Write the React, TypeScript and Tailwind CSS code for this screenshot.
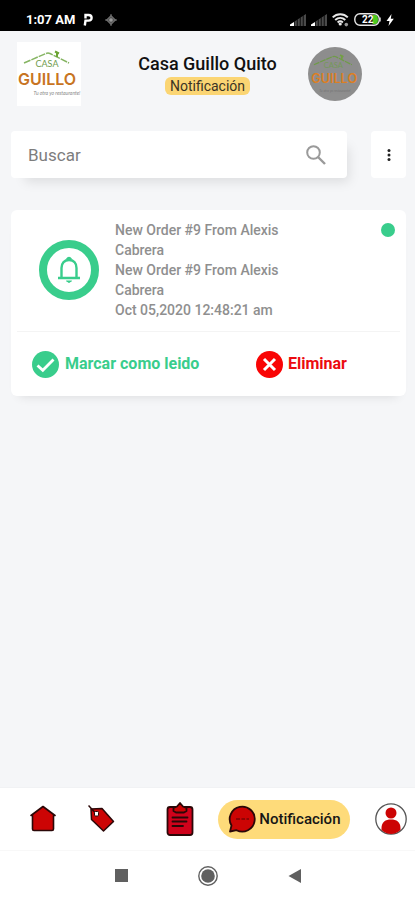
import type { ReactNode } from 'react';
import { clsx } from 'clsx';

interface Notification {
  id: number;
  title: string;
  message: string;
  date: string;
  unread: boolean;
}

const NOTIFICATIONS: Notification[] = [
  {
    id: 9,
    title: 'New Order #9 From Alexis Cabrera',
    message: 'New Order #9 From Alexis Cabrera',
    date: 'Oct 05,2020 12:48:21 am',
    unread: true,
  },
];

function SignalIcon() {
  return (
    <svg width="16" height="12" viewBox="0 0 16 12" aria-hidden="true">
      <path d="M0 12V10.500L4 8V12Z" fill="#fff" />
      <path
        d="M4.600 12V7.500L6.800 6V12ZM7.600 12V5.400L9.800 4V12ZM10.600 12V3.400L12.800 2V12ZM13.600 12V1.400L16 0V12Z"
        fill="#4a4a4a"
      />
    </svg>
  );
}

function WifiIcon() {
  return (
    <svg width="17" height="14" viewBox="0 0 17 14" fill="none" aria-hidden="true">
      <g stroke="#e8e8e8" strokeWidth="2">
        <path d="M0.700 4.400C5 0.300 11.500 0.300 15.800 4.400" />
        <path d="M3.200 7C6.200 4.200 10.300 4.200 13.300 7" />
        <path d="M5.600 9.400C7.200 8 9.300 8 10.900 9.400" />
      </g>
      <circle cx="8.200" cy="11" r="1.600" fill="#e8e8e8" />
      <circle cx="14.300" cy="11.600" r="1.800" fill="#999" />
    </svg>
  );
}

function BatteryIcon() {
  return (
    <svg width="27" height="13" viewBox="0 0 27 13" aria-hidden="true">
      <path d="M18.500 2H21.500Q24 2 24 6.500T21.500 11H18.500Z" fill="#4ccb1f" />
      <rect x="0.800" y="0.800" width="24.400" height="11.400" rx="5.200" fill="none" stroke="#e8e8e8" strokeWidth="1.400" />
      <path d="M26 4.500V8.500" stroke="#e8e8e8" strokeWidth="1.400" />
      <text x="8" y="10" fill="#fff" fontFamily="Roboto, sans-serif" fontSize="10" fontWeight="700">
        22
      </text>
    </svg>
  );
}

function StatusBar() {
  return (
    <div className="flex h-[31px] items-center justify-between bg-black pt-2 pr-[21px] pl-[26px] text-white">
      <div className="flex items-center gap-2">
        <span className="text-[13px] leading-4 font-bold">1:07 AM</span>
        <svg width="10" height="13" viewBox="0 0 10 13" fill="none" aria-hidden="true">
          <path d="M2.500 5.500V2H5.500Q8.600 2 8.600 4.800T5.500 7.600H2.500L1.800 12.500" stroke="#fff" strokeWidth="2.400" />
        </svg>
        <svg width="12" height="12" viewBox="0 0 12 12" fill="none" className="ml-1" aria-hidden="true">
          <path d="M6 0V12M0 6H12" stroke="#777" strokeWidth="1" />
          <path d="M6 1.500L10.500 6L6 10.500L1.500 6Z" fill="#555" stroke="#888" />
          <circle cx="6" cy="6" r="1.800" fill="#999" />
        </svg>
      </div>
      <div className="flex items-center gap-[5px]">
        <SignalIcon />
        <SignalIcon />
        <WifiIcon />
        <BatteryIcon />
        <svg width="8" height="12" viewBox="0 0 8 12" aria-hidden="true">
          <path d="M5.500 0L0.500 7H3.500L2.500 12L7.800 4.800H4.800Z" fill="#fff" />
        </svg>
      </div>
    </div>
  );
}

function Logo({ muted = false }: { muted?: boolean }) {
  return (
    <svg
      viewBox="0 0 64 64"
      role="img"
      aria-label="Casa Guillo"
      className={clsx('shrink-0', muted ? 'size-[54px] opacity-80' : 'size-16 bg-white')}
    >
      <path
        d="M7 21L29 11.500Q31 10.500 33 11.500L52 21"
        fill="none"
        stroke={muted ? '#689f38' : '#86b563'}
        strokeWidth="1.500"
        strokeDasharray="7 1"
      />
      <path d="M40 15V10M38 9.500L42 11.500" stroke="#6ca432" strokeWidth="2" />
      <text x="30" y="25" textAnchor="middle" fill="#6f9c4d" fontFamily="Lato, sans-serif" fontSize="9">
        CASA
      </text>
      <text
        x={muted ? 31 : 30}
        y="43"
        textAnchor="middle"
        fill={muted ? '#f07c08' : '#c87422'}
        fontFamily="Inter, sans-serif"
        fontSize={muted ? 15 : 16}
        fontWeight="600"
      >
        GUILLO
      </text>
      <text
        x={muted ? 32 : 40}
        y="53"
        textAnchor="middle"
        fill={muted ? '#6f6f6f' : '#8a8a8a'}
        fontFamily="Lato, sans-serif"
        fontSize={muted ? 4 : 5}
        fontStyle="italic"
      >
        Tu otra yo restaurante!
      </text>
    </svg>
  );
}

function Header() {
  return (
    <header className="grid grid-cols-[1fr_auto_1fr] items-center pt-[11px]">
      <div className="pl-[17px]">
        <Logo />
      </div>
      <div className="flex flex-col items-center">
        <h1 className="text-[18px] leading-5 font-medium text-[#111]">Casa Guillo Quito</h1>
        <span className="mt-[3px] rounded-md bg-[#fbd573] px-[5px] text-[14px] leading-[18px] text-[#3a3325]">
          Notificación
        </span>
      </div>
      <div className="pl-[31px]">
        <div className="flex size-[54px] items-center justify-center overflow-hidden rounded-full bg-[#8e8e8e]">
          <Logo muted />
        </div>
      </div>
    </header>
  );
}

function SearchRow() {
  return (
    <div className="flex gap-6 pt-[25px] pr-[9px] pl-[11px]">
      <label className="flex h-[47px] min-w-0 flex-1 items-center rounded bg-white pr-[21px] pl-[17px] shadow-[8px_10px_12px_-6px_rgba(0,0,0,0.1)]">
        <input
          type="search"
          aria-label="Buscar"
          placeholder="Buscar"
          className="min-w-0 flex-1 text-[17px] leading-6 outline-none placeholder:text-[#7d7d7d]"
        />
        <svg width="20" height="20" viewBox="0 0 20 20" fill="none" stroke="#9a9a9a" strokeWidth="2" aria-hidden="true">
          <circle cx="7.500" cy="7.500" r="6.300" />
          <path d="M12 12L19 19" strokeWidth="2.400" />
        </svg>
      </label>
      <button type="button" aria-label="Opciones" className="flex h-[47px] w-[35px] items-center justify-center rounded bg-white">
        <svg width="4" height="14" viewBox="0 0 4 14" fill="#222" aria-hidden="true">
          <circle cx="2" cy="2.500" r="1.500" />
          <circle cx="2" cy="7" r="1.500" />
          <circle cx="2" cy="11.500" r="1.500" />
        </svg>
      </button>
    </div>
  );
}

function NotificationCard({ item }: { item: Notification }) {
  return (
    <article className="rounded-md bg-white shadow-[0_8px_10px_-8px_rgba(0,0,0,0.12)]">
      <div className="flex items-start pt-[10px] pr-[11px] pb-[11px] pl-7">
        <div className="flex size-[60px] shrink-0 items-center justify-center self-center rounded-full border-8 border-[#39cd8c]">
          <svg width="24" height="28" viewBox="0 0 24 28" fill="none" stroke="#39cd8c" strokeWidth="2.400" aria-hidden="true">
            <path d="M1 22H23M4.500 22V12C4.500 7 7.500 4 12 4S19.500 7 19.500 12V22" />
            <path d="M10 3.500Q12 0.500 14 3.500" />
            <path d="M9.500 25H14.500L12 26.500Z" strokeWidth="1" fill="#39cd8c" />
          </svg>
        </div>
        <div className="ml-4 w-[176px] text-[14px] leading-5 font-medium text-[#8f8f8f]">
          <p>{item.title}</p>
          <p>{item.message}</p>
          <p>{item.date}</p>
        </div>
        {item.unread && <span className="mt-[3px] ml-auto size-[14px] shrink-0 rounded-full bg-[#39cd8c]" />}
      </div>

      {/* Actions */}
      <div className="mx-[6px] grid grid-cols-[224fr_144fr] border-t border-[#f4f4f4] py-[18px] pl-[15px] text-[16px] leading-7 font-bold">
        <button type="button" className="flex items-center gap-[6px] text-left text-[#39cd8c]">
          <svg width="27" height="27" viewBox="0 0 27 27" fill="none" aria-hidden="true">
            <circle cx="13.500" cy="13.500" r="13.500" fill="#39cd8c" />
            <path d="M5.500 14.500L10.800 19.300L21.500 8.500" stroke="#fff" strokeWidth="2.800" />
          </svg>
          Marcar como leido
        </button>
        <button type="button" className="flex items-center gap-[5px] text-left text-[#ec0b10]">
          <svg width="27" height="27" viewBox="0 0 27 27" fill="none" aria-hidden="true">
            <circle cx="13.500" cy="13.500" r="13.500" fill="#f90505" />
            <path d="M8 8L19 19M19 8L8 19" stroke="#fff" strokeWidth="3" />
          </svg>
          Eliminar
        </button>
      </div>
    </article>
  );
}

function NavLink({ label, children, className }: { label: string; children: ReactNode; className?: string }) {
  return (
    <a href="#" aria-label={label} className={className}>
      {children}
    </a>
  );
}

function BottomNav() {
  return (
    <nav className="flex h-[63px] items-center justify-between border-t border-[#f1f2f4] bg-white pr-2 pl-[30px]">
      <div className="flex items-center gap-8">
        <NavLink label="Inicio">
          <svg width="26" height="28" viewBox="0 0 26 28" stroke="#2b0808" strokeWidth="1.600" strokeLinejoin="round" aria-hidden="true">
            <path d="M1 10.500L13 1.500L25 10.500H23.500V24Q23.500 25.500 22 25.500H4Q2.500 25.500 2.500 24V10.500Z" fill="#cc0404" />
          </svg>
        </NavLink>
        <NavLink label="Ofertas">
          <svg width="27" height="28" viewBox="0 0 27 28" stroke="#2b0808" strokeWidth="1.500" strokeLinejoin="round" aria-hidden="true">
            <path d="M3 4L14 3.500L25.500 16.500L15.500 26L3.500 14.500Z" fill="#cc0404" />
            <rect x="6.500" y="6.500" width="4" height="4.500" rx="1" fill="#fff" strokeWidth="1" />
            <path d="M0.500 0.500L6.500 7" />
          </svg>
        </NavLink>
      </div>
      <NavLink label="Pedidos" className="ml-[26px]">
        <svg width="28" height="34" viewBox="0 0 28 34" stroke="#2b0808" strokeWidth="1.800" strokeLinejoin="round" aria-hidden="true">
          <rect x="1.500" y="5" width="25" height="28" rx="2.500" fill="#d0021b" />
          <path d="M7.500 9V6L11 4.500L14 1L17 4.500L20.500 6V9L18 10.500H10Z" fill="#cc0404" />
          <path d="M6.500 15.500H21.500M6.500 19.500H20.500M6.500 24H17" strokeLinecap="round" />
        </svg>
      </NavLink>
      <a
        href="#"
        aria-current="page"
        className="flex h-[39px] w-[132px] items-center gap-[3px] rounded-[20px] bg-[#fedb7a] pl-[10px] text-[15px] font-medium text-[#161616]"
      >
        <svg width="28" height="28" viewBox="0 0 28 28" className="shrink-0" aria-hidden="true">
          <path
            d="M2 26.500L3.500 20.500A12.500 12.500 0 1 1 8.500 25.200Z"
            fill="#cc0404"
            stroke="#2b0808"
            strokeWidth="1.800"
            strokeLinejoin="round"
          />
          <path d="M8 14H12M13.500 14H17M18.500 14H21" stroke="#7c0303" strokeWidth="1.400" />
        </svg>
        Notificación
      </a>
      <NavLink label="Perfil">
        <svg width="32" height="32" viewBox="0 0 32 32" aria-hidden="true">
          <circle cx="16" cy="16" r="15.200" fill="#fff" stroke="#555" strokeWidth="1.300" />
          <circle cx="16" cy="10" r="5.500" fill="#cc0404" />
          <path d="M6.500 27V25C6.500 19 10.500 16.500 16 16.500S25.500 19 25.500 25V27Q21 31 16 31T6.500 27Z" fill="#cc0404" />
        </svg>
      </NavLink>
    </nav>
  );
}

function SystemNav() {
  return (
    <div className="flex h-[50px] items-center justify-center gap-[70px] border-t border-[#f8f8f8] bg-white">
      <button type="button" aria-label="Recientes">
        <svg width="13" height="13" viewBox="0 0 13 13" aria-hidden="true">
          <rect width="13" height="13" fill="#606060" />
        </svg>
      </button>
      <button type="button" aria-label="Inicio del sistema">
        <svg width="20" height="20" viewBox="0 0 20 20" aria-hidden="true">
          <circle cx="10" cy="10" r="9.200" fill="none" stroke="#606060" strokeWidth="1.400" />
          <circle cx="10" cy="10" r="6.800" fill="#606060" />
        </svg>
      </button>
      <button type="button" aria-label="Volver">
        <svg width="13" height="14" viewBox="0 0 13 14" aria-hidden="true">
          <path d="M13 0V14L0.500 7Z" fill="#606060" />
        </svg>
      </button>
    </div>
  );
}

export default function App() {
  return (
    <div className="flex min-h-screen flex-col bg-[#f5f6f8] font-[Roboto,sans-serif]">
      <StatusBar />
      <Header />
      <SearchRow />
      <main className="flex-1 space-y-4 pt-8 pr-[9px] pl-[11px]">
        {NOTIFICATIONS.map((item) => (
          <NotificationCard key={item.id} item={item} />
        ))}
      </main>
      <BottomNav />
      <SystemNav />
    </div>
  );
}
